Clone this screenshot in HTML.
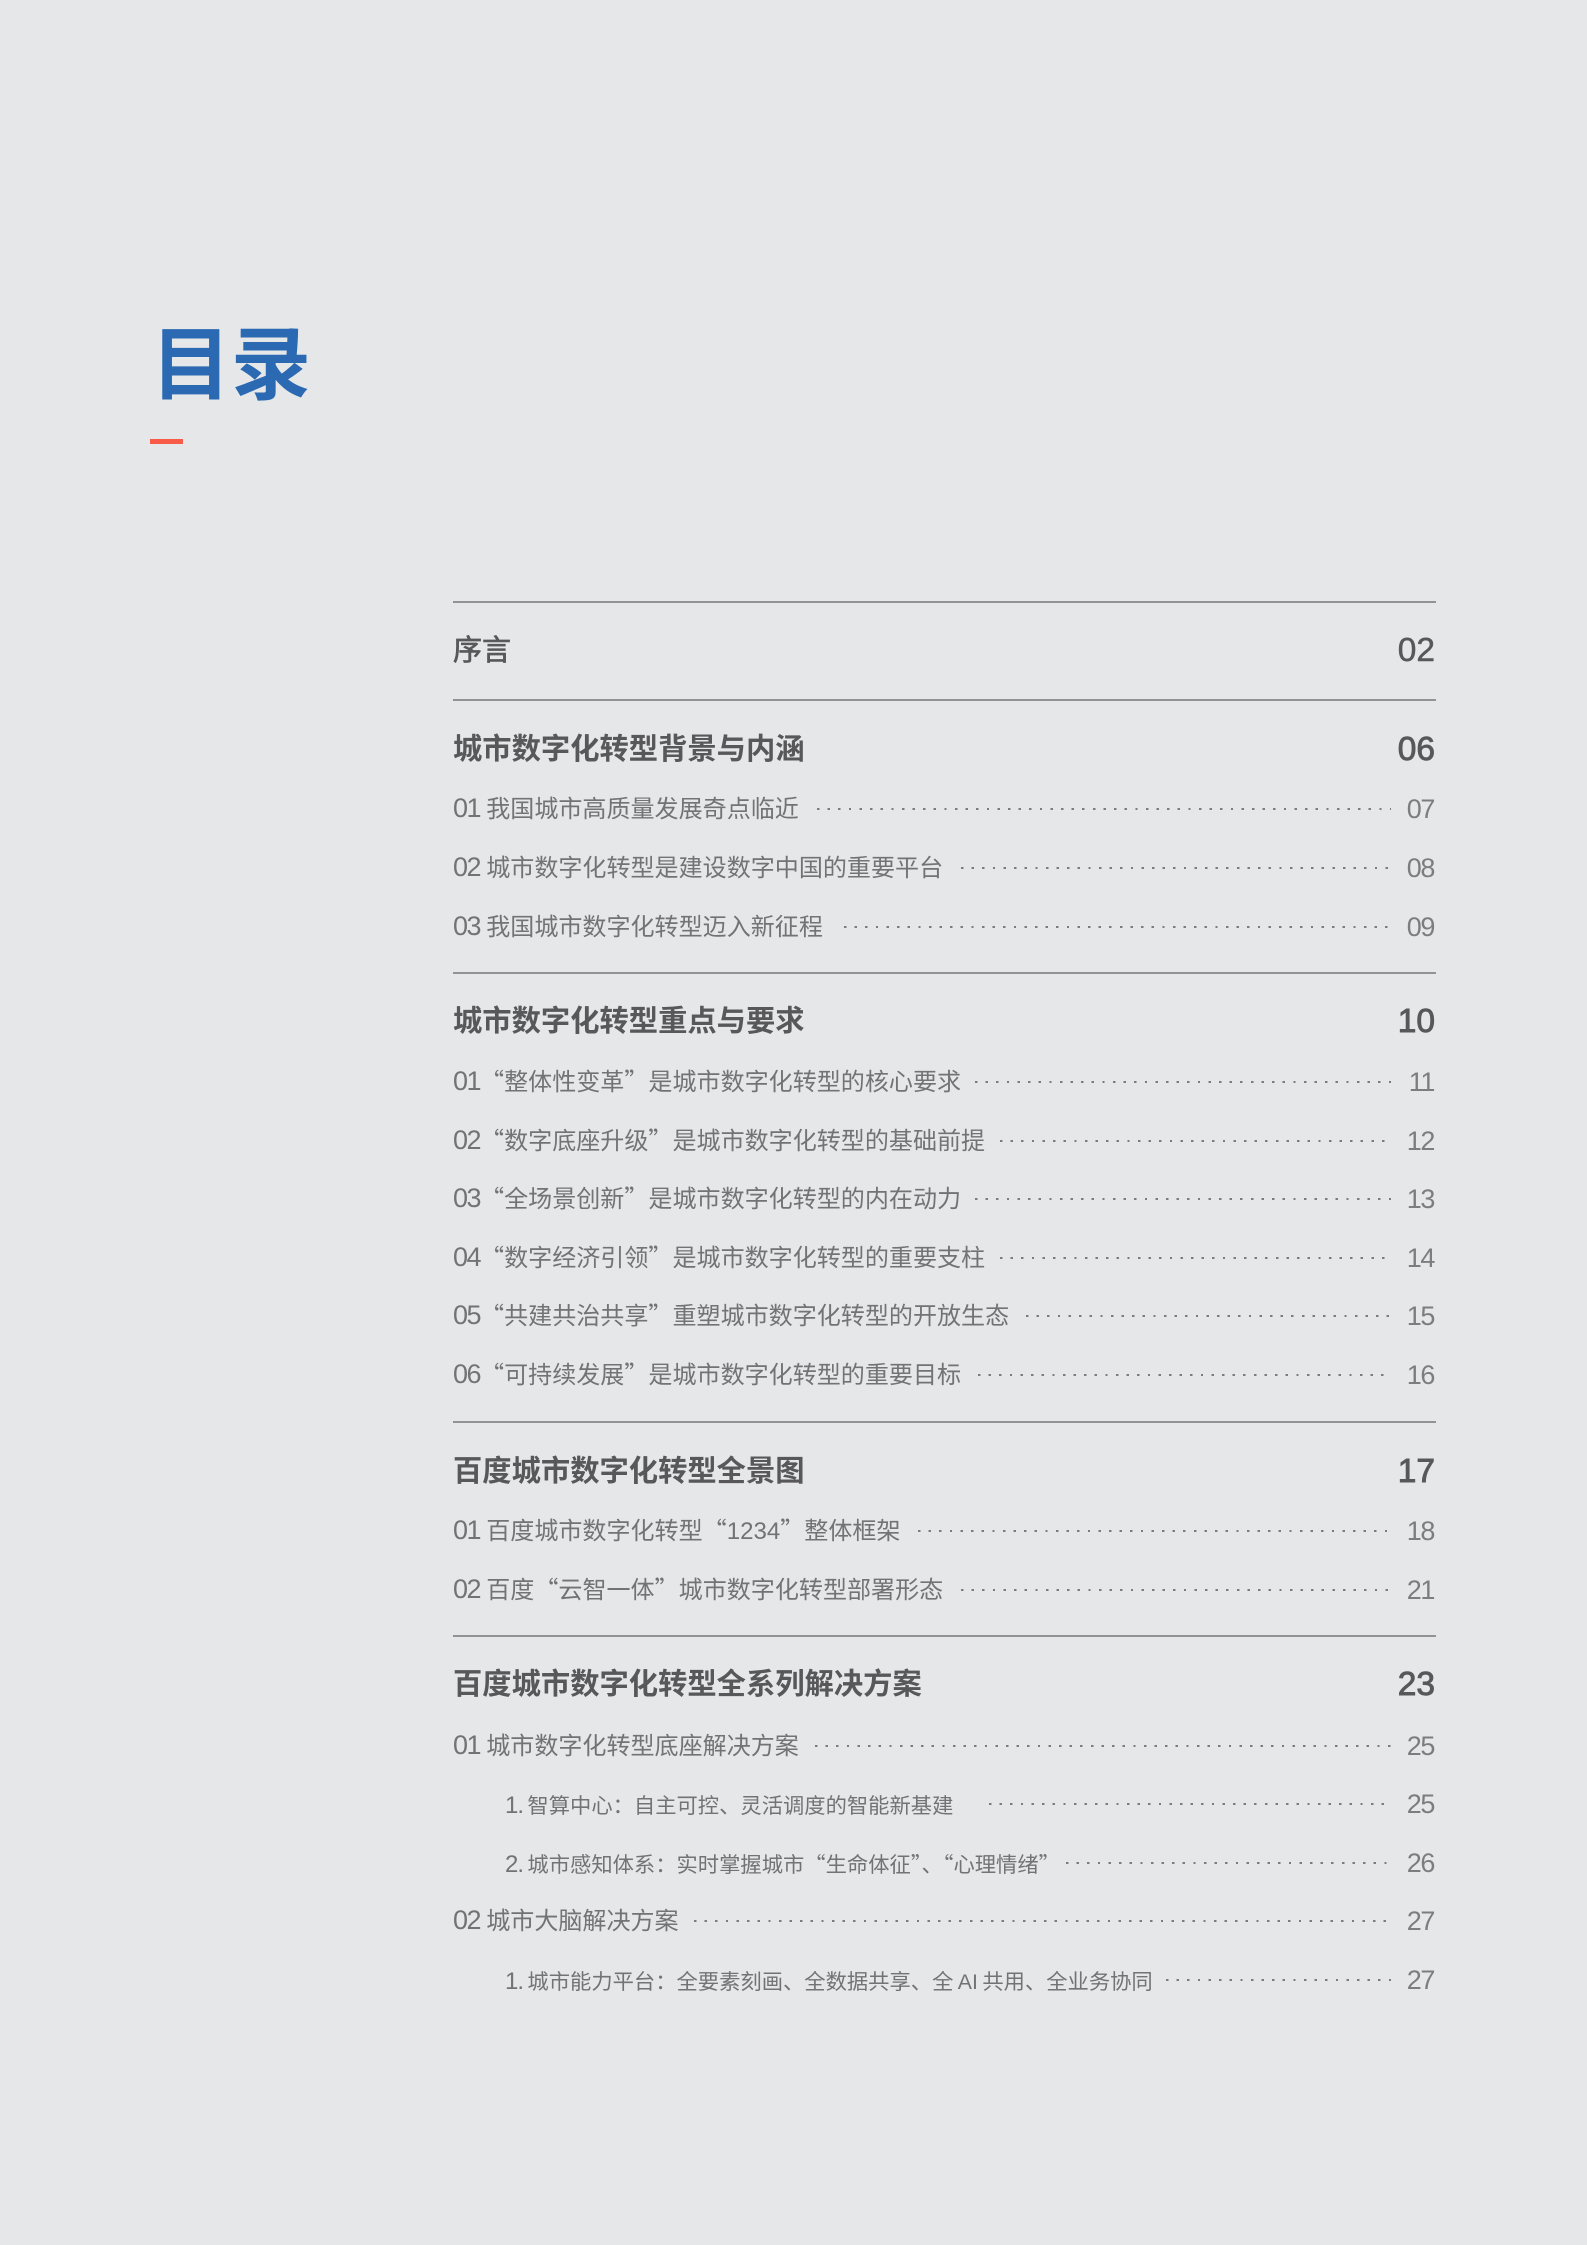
<!DOCTYPE html>
<html lang="zh-CN"><head><meta charset="utf-8"><title>目录</title>
<style>
html,body{margin:0;padding:0;background:#e5e7e9}
body{position:relative;width:1587px;height:2245px;overflow:hidden;font-family:"Liberation Sans","Noto Sans CJK SC",sans-serif}
.t{position:absolute;left:151px;top:304px;font-size:80px;line-height:110px;font-weight:700;color:#2b6ab3;white-space:nowrap;font-family:"Noto Sans CJK SC",sans-serif}
.bar{position:absolute;left:150px;top:439px;width:33px;height:5px;background:#f85c48}
.l{position:absolute;left:453px;width:983px;height:2px;background:#929394}
.r{position:absolute;left:453px;white-space:nowrap;height:40px;line-height:40px}
.h{font-size:29.3px;font-weight:700;color:#58585a;margin-top:1px}
.p{font-size:29px;font-weight:400;-webkit-text-stroke:.7px #58585a}
.s{font-size:24.05px;color:#737375;margin-top:1px;word-spacing:-.5px}
.ss{font-size:21.3px;color:#737375;word-spacing:-1.5px;margin-top:2px}
.s u{font-size:27px;letter-spacing:-1.5px;text-decoration:none;line-height:0}
.ss u{font-size:24px;letter-spacing:-1px;text-decoration:none;line-height:0}
.n{position:absolute;right:153px;height:40px;line-height:40px;text-align:right}
.nh{font-size:33.5px;color:#58585a;-webkit-text-stroke:.5px #58585a;right:152px;margin-top:1px}
.nb{-webkit-text-stroke:.9px #58585a}
.ns{font-size:27px;letter-spacing:-1.4px;color:#7d7d7f}
.d{position:absolute;height:2px;background-image:repeating-linear-gradient(to right,#7c7c7e 0,#7c7c7e 2.4px,transparent 2.4px,transparent 10.61px);right:196px}
i{font-style:normal;font-family:"Noto Sans CJK SC",sans-serif;line-height:0}
</style></head><body>
<div class="t">目录</div><div class="bar"></div>

<div class="l" style="top:601px"></div>
<div class="r h p" style="top:630px">序言</div><div class="n nh" style="top:630px">02</div>
<div class="l" style="top:699px"></div>

<div class="r h" style="top:729px">城市数字化转型背景与内涵</div><div class="n nh nb" style="top:729px">06</div>
<div class="r s" style="top:789px"><u>01</u> 我国城市高质量发展奇点临近</div><div class="d" style="top:808px;left:817px"></div><div class="n ns" style="top:789px">07</div>
<div class="r s" style="top:848px"><u>02</u> 城市数字化转型是建设数字中国的重要平台</div><div class="d" style="top:867px;left:961px"></div><div class="n ns" style="top:848px">08</div>
<div class="r s" style="top:907px"><u>03</u> 我国城市数字化转型迈入新征程</div><div class="d" style="top:926px;left:844px"></div><div class="n ns" style="top:907px">09</div>
<div class="l" style="top:972px"></div>

<div class="r h" style="top:1001px">城市数字化转型重点与要求</div><div class="n nh nb" style="top:1001px">10</div>
<div class="r s" style="top:1062px"><u>01</u><i>“</i>整体性变革<i>”</i>是城市数字化转型的核心要求</div><div class="d" style="top:1081px;left:975px"></div><div class="n ns" style="top:1062px">11</div>
<div class="r s" style="top:1121px"><u>02</u><i>“</i>数字底座升级<i>”</i>是城市数字化转型的基础前提</div><div class="d" style="top:1140px;left:1000px"></div><div class="n ns" style="top:1121px">12</div>
<div class="r s" style="top:1179px"><u>03</u><i>“</i>全场景创新<i>”</i>是城市数字化转型的内在动力</div><div class="d" style="top:1198px;left:975px"></div><div class="n ns" style="top:1179px">13</div>
<div class="r s" style="top:1238px"><u>04</u><i>“</i>数字经济引领<i>”</i>是城市数字化转型的重要支柱</div><div class="d" style="top:1257px;left:1000px"></div><div class="n ns" style="top:1238px">14</div>
<div class="r s" style="top:1296px"><u>05</u><i>“</i>共建共治共享<i>”</i>重塑城市数字化转型的开放生态</div><div class="d" style="top:1315px;left:1026px"></div><div class="n ns" style="top:1296px">15</div>
<div class="r s" style="top:1355px"><u>06</u><i>“</i>可持续发展<i>”</i>是城市数字化转型的重要目标</div><div class="d" style="top:1374px;left:978px"></div><div class="n ns" style="top:1355px">16</div>
<div class="l" style="top:1421px"></div>

<div class="r h" style="top:1451px">百度城市数字化转型全景图</div><div class="n nh nb" style="top:1451px">17</div>
<div class="r s" style="top:1511px"><u>01</u> 百度城市数字化转型<i>“</i>1234<i>”</i>整体框架</div><div class="d" style="top:1530px;left:918px"></div><div class="n ns" style="top:1511px">18</div>
<div class="r s" style="top:1570px"><u>02</u> 百度<i>“</i>云智一体<i>”</i>城市数字化转型部署形态</div><div class="d" style="top:1589px;left:961px"></div><div class="n ns" style="top:1570px">21</div>
<div class="l" style="top:1635px"></div>

<div class="r h" style="top:1664px">百度城市数字化转型全系列解决方案</div><div class="n nh nb" style="top:1664px">23</div>
<div class="r s" style="top:1726px"><u>01</u> 城市数字化转型底座解决方案</div><div class="d" style="top:1745px;left:815px"></div><div class="n ns" style="top:1726px">25</div>
<div class="r ss" style="top:1784px;left:505px"><u>1.</u> 智算中心：自主可控、灵活调度的智能新基建</div><div class="d" style="top:1803px;left:989px"></div><div class="n ns" style="top:1784px">25</div>
<div class="r ss" style="top:1843px;left:505px"><u>2.</u> 城市感知体系：实时掌握城市<i>“</i>生命体征<i>”</i>、<i>“</i>心理情绪<i>”</i></div><div class="d" style="top:1862px;left:1066px"></div><div class="n ns" style="top:1843px">26</div>
<div class="r s" style="top:1901px"><u>02</u> 城市大脑解决方案</div><div class="d" style="top:1920px;left:694px"></div><div class="n ns" style="top:1901px">27</div>
<div class="r ss" style="top:1960px;left:505px"><u>1.</u> 城市能力平台：全要素刻画、全数据共享、全 AI 共用、全业务协同</div><div class="d" style="top:1979px;left:1166px"></div><div class="n ns" style="top:1960px">27</div>
</body></html>
